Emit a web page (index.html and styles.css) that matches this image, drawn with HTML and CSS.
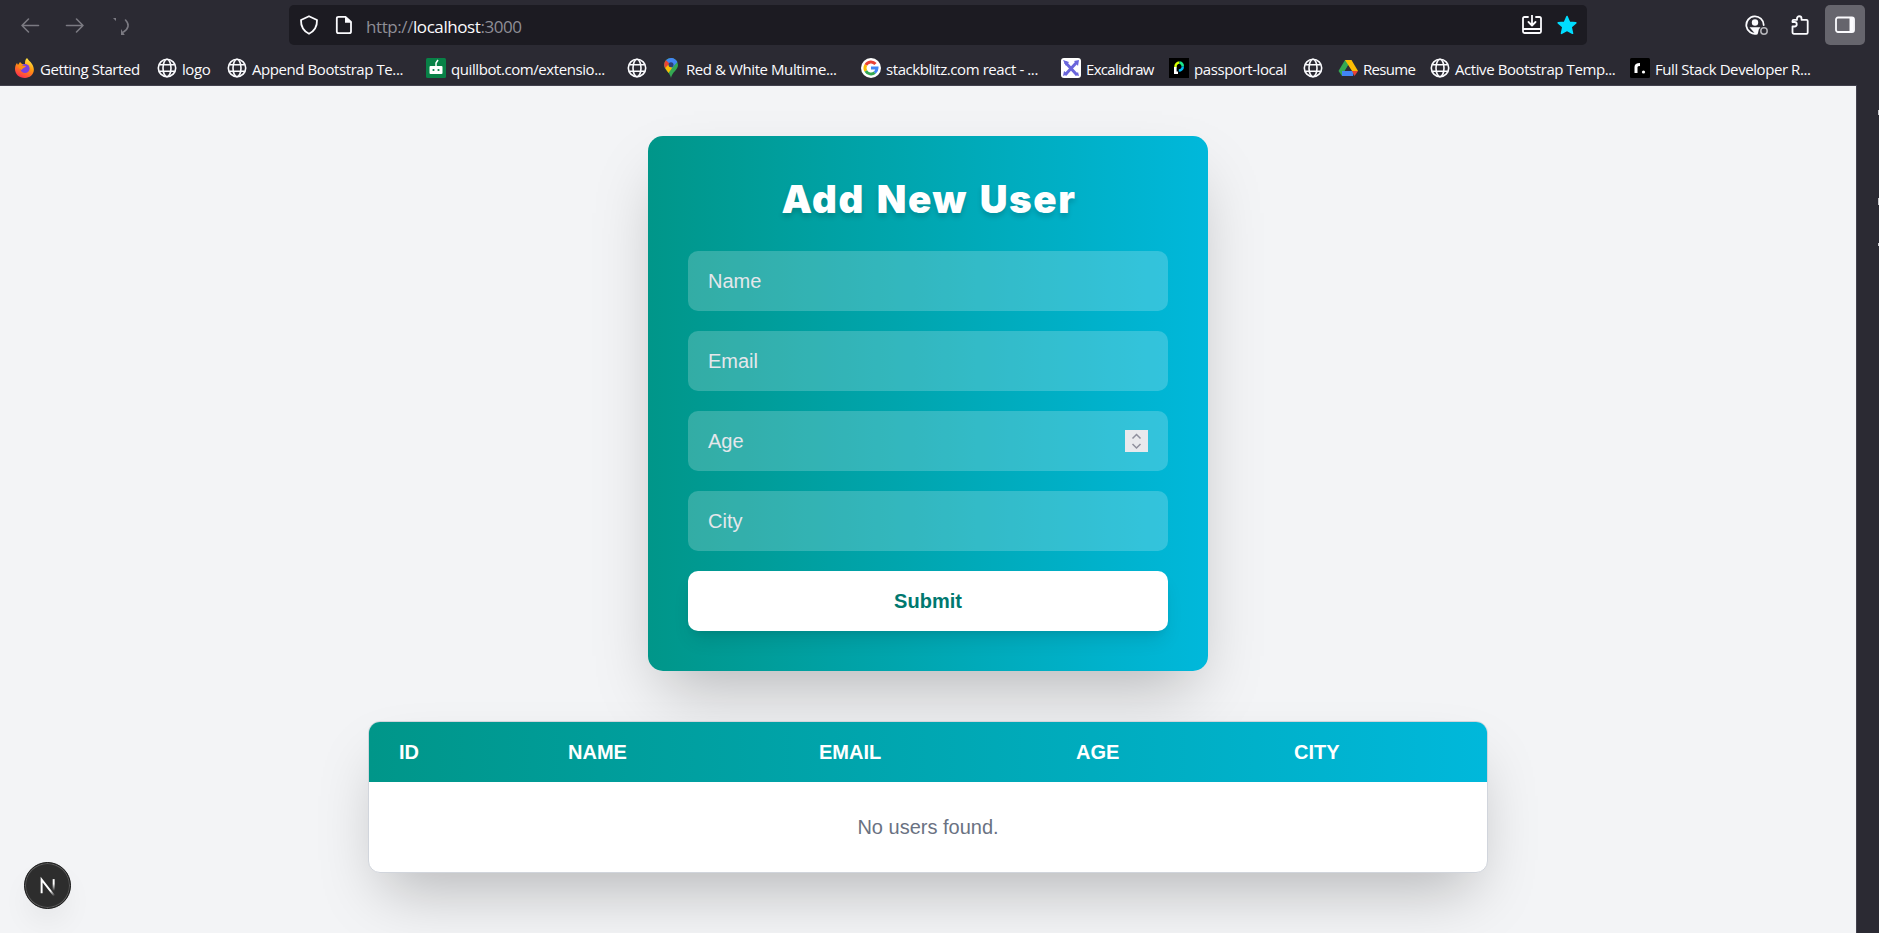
FILE: index.html
```html
<!DOCTYPE html>
<html lang="en">
<head>
<meta charset="utf-8">
<title>Add New User</title>
<link rel="stylesheet" href="styles.css">
</head>
<body>
<svg class="defs" width="0" height="0">
  <symbol id="globe" viewBox="0 0 20 20"><g fill="none" stroke="#fbfbfe" stroke-width="1.6"><circle cx="10" cy="10" r="8.7"/><ellipse cx="10" cy="10" rx="4" ry="8.7"/><path d="M2.2 6.8h15.6M2.2 13.2h15.6"/></g></symbol>
</svg>
<header class="chrome">
  <div class="navbar">
    <div class="nav-buttons">
      <svg class="ico" viewBox="0 0 20 20"><path d="M18.500 10.500H2M8.500 4l-6.500 6.500L8.500 17"/></svg>
      <svg class="ico" viewBox="0 0 20 20"><path d="M1.500 10.500H18M11.500 4l6.500 6.500-6.500 6.500"/></svg>
      <svg class="ico" viewBox="0 0 20 20"><path d="M15.500 5c4 4 3.500 8.500-2 12"/><path class="solid" d="M3 3h3v3zM11 14v7.500l4.500-.3z"/></svg>
    </div>
    <div class="urlbar">
      <svg class="ico bright" viewBox="0 0 20 20"><path d="M10 1.200L18 5c.2 6-2.500 11-8 13.800C4.500 16 1.800 11 2 5z"/></svg>
      <svg class="ico bright" viewBox="0 0 20 20"><path d="M4.500 1.800h7L17 7v9.500q0 1.700-1.700 1.700H4.500q-1.700 0-1.700-1.700v-13q0-1.700 1.700-1.700z"/><path class="solid" d="M11 1.500l6.500 6.300H11z"/></svg>
      <span class="url">http://<b>localhost</b>:3000</span>
      <svg class="ico bright end" viewBox="0 0 20 20"><path d="M6 2H2.500Q1 2 1 3.500v13Q1 18 2.500 18h15q1.500 0 1.500-1.500v-13Q19 2 17.500 2H14M1 14h18M10 0v10M6.500 7l3.500 3.500L13.500 7"/></svg>
      <svg class="ico star" viewBox="0 0 20 20"><path d="M10 1.500l2.500 5.700 6.300.6-4.700 4.200 1.400 6.300L10 15.200l-5.500 3.100L5.900 12 1.200 7.800l6.300-.6z"/></svg>
    </div>
    <div class="tools">
      <svg class="ico bright account" viewBox="0 0 24 20"><path d="M18.700 10A8.700 8.700 0 1 0 12 18.500"/><circle class="solid" cx="10" cy="7.500" r="3.200"/><path class="solid" d="M4.500 12.300h11l-1.700 2.200-.8 3.500h-3.500z"/><circle class="badge" cx="19" cy="16" r="3.200"/></svg>
      <svg class="ico bright" viewBox="0 0 20 20"><path d="M2.500 13.500v-2h2a2 2 0 0 0 0-4.500h-2V6q0-1.200 1.200-1.200H7V3.500a2.200 2.200 0 0 1 4.500 0v1.300h5q1.200 0 1.200 1.200v11.500q0 1.300-1.200 1.300H4q-1.500 0-1.500-1.500z"/></svg>
      <span class="side-btn"><svg class="ico bright" viewBox="0 0 20 20"><rect x="1" y="2.500" width="18" height="14.500" rx="2"/><path class="solid" d="M14.500 3h4v14h-4z"/></svg></span>
    </div>
  </div>
  <nav class="bookmarks">
    <a class="bm w142"><svg viewBox="0 0 20 20"><defs><linearGradient id="ff" x1=".8" y1="0" x2=".3" y2="1"><stop offset="0" stop-color="#fff44f"/><stop offset=".45" stop-color="#ff980e"/><stop offset="1" stop-color="#ff2a50"/></linearGradient></defs><path fill="url(#ff)" d="M12 0c1 2 3 3 5 6 5 8-1 14-7 14C4 20 0 16 0 11c0-3 1-5 2-6l1 2 2-3 2 2 3 0c0-3 0-4 2-6z"/><circle cx="10" cy="10.500" r="4.600" fill="#7a3fe0"/><path fill="#ff8a16" d="M3 7c3-1 5 1 8 1-1 2-4 2-4 4-2-1-4-2-4-5z"/></svg><span>Getting Started</span></a>
    <a class="bm w70"><svg><use href="#globe"/></svg><span>logo</span></a>
    <a class="bm w199"><svg><use href="#globe"/></svg><span>Append Bootstrap Te...</span></a>
    <a class="bm w201"><svg viewBox="0 0 20 20"><rect width="20" height="20" rx="1.500" fill="#088147"/><rect x="3.500" y="8" width="13" height="8" rx="1" fill="#fff"/><path d="M10 8V5l2-3" stroke="#fff" stroke-width="1.500" fill="none"/><circle cx="7.500" cy="12" r="1.100" fill="#088147"/><circle cx="12.500" cy="12" r="1.100" fill="#088147"/></svg><span>quillbot.com/extensio...</span></a>
    <a class="bm w34"><svg><use href="#globe"/></svg></a>
    <a class="bm w200"><svg viewBox="0 0 20 20"><path fill="#34a853" d="M10 20C9 14 3 12 3 7a7 7 0 0 1 14 0c0 5-6 7-7 13z"/><path fill="#4285f4" d="M5 2.200A7 7 0 0 1 16.400 4L11 10z"/><path fill="#ea4335" d="M5 2.200L9 6 4.500 10.500C2.500 8 3 4 5 2.200z"/><path fill="#fbbc04" d="M4.200 10L8 6l3 4-3.500 5z"/><circle cx="10" cy="6.800" r="2.500" fill="#2c3f78"/></svg><span>Red &amp; White Multime...</span></a>
    <a class="bm w200"><svg viewBox="0 0 20 20"><circle cx="10" cy="10" r="10" fill="#fff"/><g fill="none" stroke-width="3"><path stroke="#ea4335" d="M4.800 7A6 6 0 0 1 14.500 6"/><path stroke="#fbbc05" d="M4.800 7a6 6 0 0 0 0 6"/><path stroke="#34a853" d="M4.800 13a6 6 0 0 0 9 1.600"/><path stroke="#4285f4" d="M13.800 14.600A6 6 0 0 0 16 10h-6"/></g></svg><span>stackblitz.com react - ...</span></a>
    <a class="bm w108 tight"><svg viewBox="0 0 20 20"><rect width="20" height="20" rx="3" fill="#fff"/><path d="M4 4l12 13M16 4L4 17" stroke="#6965db" stroke-width="3"/><path fill="#6965db" d="M2 2l6 2-3 4zM18 2l-5 1 4 5zM2 18l1-5 4 3zM18 18l-1-4-3 3z"/></svg><span>Excalidraw</span></a>
    <a class="bm w134"><svg viewBox="0 0 20 20"><path d="M0 0h20v20H0z"/><path d="M6.500 9.500V9a4.300 4.300 0 0 1 4-4.500" stroke="#d6ff00" stroke-width="2.500" fill="none"/><path d="M10.500 4.500a4 4 0 0 1 3.300 4" stroke="#19e68c" stroke-width="2.500" fill="none"/><path d="M13.800 8.500a4 4 0 0 1-4 4" stroke="#00b9f1" stroke-width="2.500" fill="none"/><path fill="#fff" d="M5 9h2.600v4.500H9V16H5z"/></svg><span>passport-local</span></a>
    <a class="bm w35"><svg><use href="#globe"/></svg></a>
    <a class="bm w92 tight"><svg viewBox="0 0 20 20"><path fill="#34a853" d="M7 2h6.500L4 18l-3.500-5z"/><path fill="#fbbc04" d="M7 2h6.500L20 13h-6z"/><path fill="#4285f4" d="M4 13h12l-1 5H4z"/><path fill="#ea4335" d="M14 13h6l-3.500 5z"/><path fill="#2d2c38" d="M10 7.500l3.300 5.500H6.700z"/></svg><span>Resume</span></a>
    <a class="bm w200"><svg><use href="#globe"/></svg><span>Active Bootstrap Temp...</span></a>
    <a class="bm"><svg viewBox="0 0 20 20"><rect width="20" height="20" rx="1.500"/><path d="M6 15V9q0-2.500 4-2.500" stroke="#fff" stroke-width="3" fill="none"/><circle cx="13.500" cy="14" r="1.600" fill="#fff"/></svg><span>Full Stack Developer R...</span></a>
  </nav>
</header>
<div class="workspace">
  <main class="page">
    <form class="card">
      <h1>Add New User</h1>
      <div class="field">Name</div>
      <div class="field">Email</div>
      <div class="field">Age<svg class="spin" viewBox="0 0 23 22"><path d="M7.500 8.500L11.500 4.500l4 4M7.500 14l4 4 4-4"/></svg></div>
      <div class="field">City</div>
      <button class="submit" type="button">Submit</button>
    </form>
    <section class="users">
      <div class="head"><span>ID</span><span>NAME</span><span>EMAIL</span><span>AGE</span><span>CITY</span></div>
      <div class="empty">No users found.</div>
    </section>
    <div class="dev"><svg viewBox="0 0 46 46"><defs><linearGradient id="n1" x1="0" y1="0" x2="0" y2="1"><stop offset=".4" stop-color="#fff"/><stop offset="1" stop-color="#fff" stop-opacity="0"/></linearGradient><linearGradient id="n2" gradientUnits="userSpaceOnUse" x1="24" y1="24" x2="31" y2="33"><stop offset=".4" stop-color="#fff"/><stop offset="1" stop-color="#fff" stop-opacity="0"/></linearGradient></defs><path d="M17 31V17l13 16.500" fill="none" stroke="url(#n2)" stroke-width="2"/><rect x="28.300" y="16.500" width="2" height="12" fill="url(#n1)"/></svg></div>
  </main>
  <aside class="sidebar"><i class="m1"></i><i class="m2"></i><i class="m3"></i></aside>
</div>
</body>
</html>
```
FILE: styles.css
```css
* { box-sizing: border-box; }
body { margin: 0; height: 933px; overflow: hidden; background: #2b2a33; font-family: "Liberation Sans", Arial, sans-serif; display: flex; flex-direction: column; }
.defs { position: absolute; }
.chrome { height: 85px; flex: none; background: #2b2a33; color: #fbfbfe; }
.navbar { height: 50px; padding-top: 5px; display: flex; }
.nav-buttons { width: 289px; height: 40px; padding-left: 20px; display: flex; align-items: center; gap: 25px; }
.ico { width: 20px; height: 20px; flex: none; fill: none; stroke: #7b7a82; stroke-width: 1.6; stroke-linecap: round; stroke-linejoin: round; }
.ico .solid { fill: #7b7a82; stroke: none; }
.bright { stroke: #fbfbfe; stroke-width: 1.8; }
.bright .solid { fill: #fbfbfe; }
.urlbar { width: 1298px; height: 40px; padding: 0 10px; border-radius: 5px; background: #1c1b22; display: flex; align-items: center; gap: 15px; }
.url { font: 17px/38px "Open Sans", "Noto Sans", sans-serif; letter-spacing: -0.42px; padding-top: 3px; margin-left: -3px; color: #8f8e96; white-space: nowrap; }
.url b { font-weight: 400; color: #fbfbfe; }
.end { margin-left: auto; }
.star { fill: #00ddff; stroke: #00ddff; }
.tools { margin-left: auto; padding-right: 14px; height: 40px; display: flex; align-items: center; }
.account { width: 24px; margin-right: 21px; }
.account .badge { stroke: #b5b5ba; stroke-width: 1.5; }
.side-btn { width: 40px; height: 40px; margin-left: 15px; border-radius: 5px; background: #66656d; display: grid; place-items: center; }
.bookmarks { height: 35px; padding: 1px 0 0 15px; display: flex; align-items: center; }
.bm { flex: none; display: flex; align-items: center; gap: 5px; font: 15px/20px "Open Sans", "Noto Sans", sans-serif; letter-spacing: -0.42px; white-space: nowrap; }
.bm span { padding-top: 2px; }
.tight { letter-spacing: -0.68px; }
.bm svg { width: 20px; height: 20px; flex: none; }
.w34 { width: 34px; } .w35 { width: 35px; } .w70 { width: 70px; } .w92 { width: 92px; }
.w108 { width: 108px; } .w134 { width: 134px; } .w142 { width: 142px; }
.w199 { width: 199px; } .w200 { width: 200px; } .w201 { width: 201px; }
.workspace { flex: 1; display: flex; min-height: 0; }
.page { width: 1857px; padding: 50px 0 0; border-top: 1px solid #42414d; border-right: 1px solid #42414d; background: #f3f4f6; overflow: hidden; display: flex; flex-direction: column; align-items: center; gap: 50px; position: relative; }
.card { flex: none; width: 560px; height: 535px; padding: 40px; border-radius: 15px; background: linear-gradient(to right, #009689, #00b8db); box-shadow: 0 31px 62px -15px rgba(0,0,0,.25); display: flex; flex-direction: column; gap: 20px; }
h1 { margin: 0 0 10px; height: 45px; padding: 1px 0 0 2px; font: 900 38.5px/45px Inter, sans-serif; letter-spacing: 1.6px; word-spacing: 2.5px; color: #fff; text-align: center; text-shadow: 0 4px 5px rgba(0,0,0,.15); white-space: nowrap; }
.field { height: 60px; padding: 0 20px; border-radius: 10px; background: rgba(255,255,255,.2); color: #e5e7eb; font-size: 20px; display: flex; align-items: center; justify-content: space-between; }
.spin { width: 23px; height: 22px; background: #e9e9ed; fill: none; stroke: #8f8f9d; stroke-width: 1.5; }
.submit { height: 60px; border: 0; border-radius: 10px; background: #fff; color: #00786f; font: bold 20px "Liberation Sans", Arial, sans-serif; box-shadow: 0 12px 19px -4px rgba(0,0,0,.1), 0 5px 8px -5px rgba(0,0,0,.1); }
.users { flex: none; width: 1120px; height: 152px; border: 1px solid #d1d5dc; border-radius: 12px; overflow: hidden; background: #fff; box-shadow: 0 31px 62px -15px rgba(0,0,0,.25); }
.head { height: 60px; padding-left: 30px; background: linear-gradient(to right, #009689, #00b8db); color: #fff; font-weight: bold; font-size: 20px; display: grid; grid-template-columns: 169px 251px 257px 218px 1fr; align-items: center; }
.empty { height: 90px; line-height: 90px; text-align: center; color: #6a7282; font-size: 20px; }
.dev { position: absolute; left: 24px; bottom: 24px; width: 47px; height: 47px; border-radius: 50%; background: #2d2d2d; border: 1px solid #171717; box-shadow: inset 0 0 0 1px #5a5a5a, 0 16px 32px -8px rgba(0,0,0,.1); }
.dev svg { width: 45px; height: 45px; display: block; }
.sidebar { flex: 1; background: #2b2a33; display: flex; flex-direction: column; align-items: flex-end; padding-top: 25px; }
.sidebar i { width: 1px; height: 5px; background: #c8c8cc; }
.sidebar .m2 { height: 7px; margin-top: 83px; }
.sidebar .m3 { height: 3px; margin-top: 38px; }
```
